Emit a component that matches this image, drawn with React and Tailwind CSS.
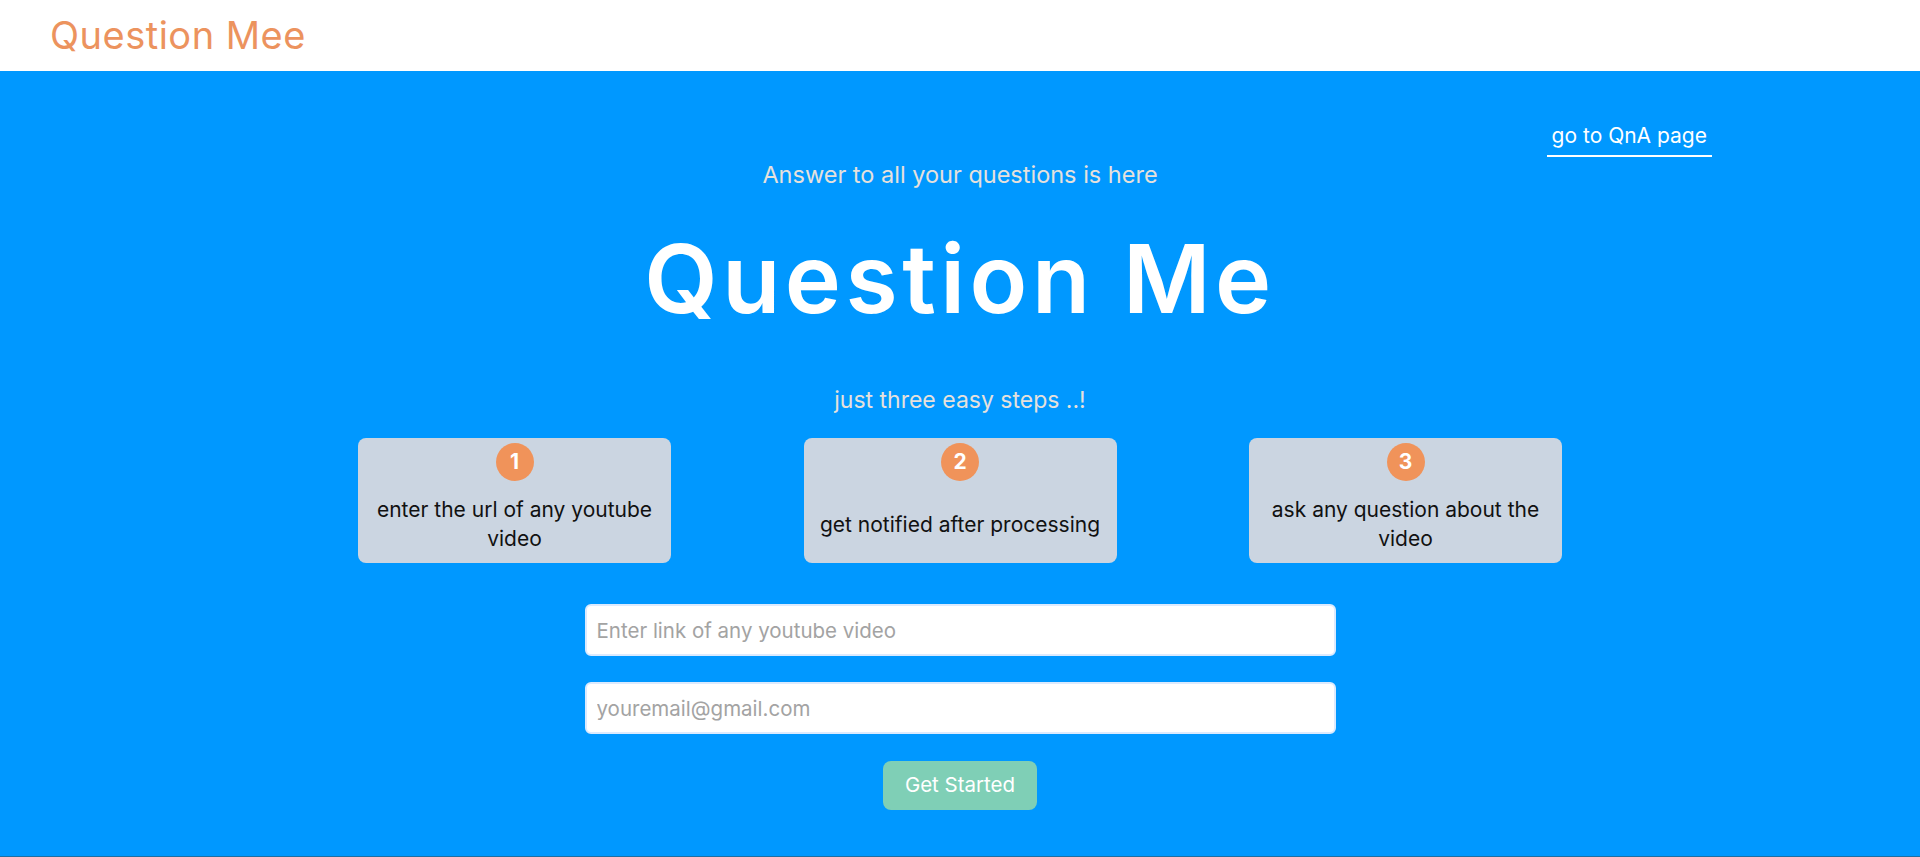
import { useState } from "react";

const steps = [
  { n: 1, text: "enter the url of any youtube video" },
  { n: 2, text: "get notified after processing" },
  { n: 3, text: "ask any question about the video" },
];

export default function App() {
  const [link, setLink] = useState("");
  const [email, setEmail] = useState("");

  return (
    <div className="min-h-[857px] flex flex-col font-['Inter','Noto_Sans',sans-serif]">
      {/* Navbar */}
      <header className="h-[71px] bg-white flex items-center px-[50px]">
        <span className="text-[38px] text-[#ec935e] tracking-[0.5px]">Question Mee</span>
      </header>

      {/* Hero */}
      <main className="flex-1 bg-[#0098ff] border-b border-[#1d6fa3] flex flex-col">
        <div className="flex justify-end pr-[208px] pt-[51px]">
          <a
            href="#"
            className="px-[5px] pb-[5px] border-b-2 border-white text-white text-[21px] leading-[28px]"
          >
            go to QnA page
          </a>
        </div>

        <p className="mt-[4px] text-center text-[23.5px] leading-[28px] text-[#e6e1dc]">
          Answer to all your questions is here
        </p>

        <h1 className="mt-[42px] text-center text-white font-semibold text-[95px] leading-none tracking-[4.5px]">
          Question Me
        </h1>

        <p className="mt-[60px] text-center text-[23px] leading-[28px] text-[#e6e1dc]">
          just three easy steps ..!
        </p>

        {/* Steps */}
        <div className="mt-[24px] mx-auto w-[1204px] flex justify-between">
          {steps.map((s) => (
            <div
              key={s.n}
              className="w-[313px] h-[125px] bg-[#cbd5e1] rounded-[8px] flex flex-col items-center pt-[5px] px-[14px]"
            >
              <div className="w-[38px] h-[38px] rounded-full bg-[#f0935a] flex items-center justify-center text-white font-bold text-[21px]">
                {s.n}
              </div>
              <div className="flex-1 flex items-center pt-[4px]">
                <p className="text-center text-[21px] leading-[29px] text-[#111]">{s.text}</p>
              </div>
            </div>
          ))}
        </div>

        {/* Form */}
        <div className="mt-[41px] mx-auto w-[751px] flex flex-col gap-[26px]">
          <input
            value={link}
            onChange={(e) => setLink(e.target.value)}
            placeholder="Enter link of any youtube video"
            className="h-[52px] w-full bg-white rounded-[6px] border-2 border-[#dbeafe] px-[10px] text-[20.5px] placeholder:text-[#a3a3a3] outline-none"
          />
          <input
            value={email}
            onChange={(e) => setEmail(e.target.value)}
            placeholder="youremail@gmail.com"
            className="h-[52px] w-full bg-white rounded-[6px] border-2 border-[#dbeafe] px-[10px] text-[20.5px] placeholder:text-[#a3a3a3] outline-none"
          />
        </div>

        <div className="mt-[27px] flex justify-center">
          <button className="w-[154px] h-[49px] rounded-[8px] bg-[#7fcfb6] text-white text-[20.5px]">
            Get Started
          </button>
        </div>
      </main>
    </div>
  );
}
